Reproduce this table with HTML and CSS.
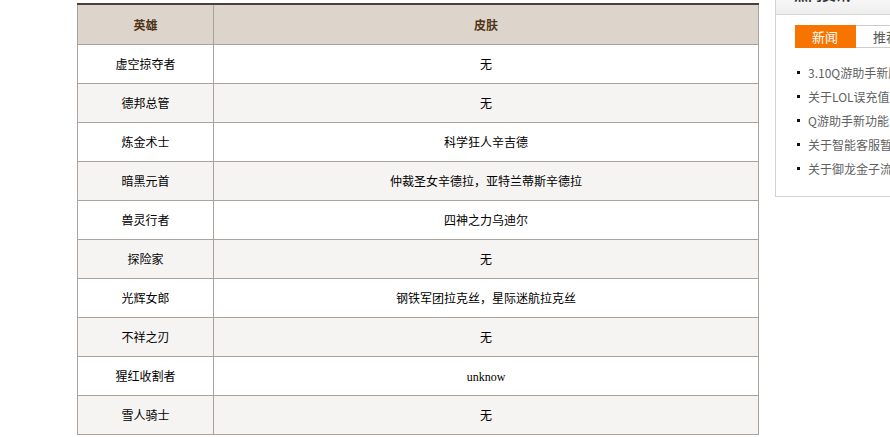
FILE: index.html
```html
<!DOCTYPE html>
<html lang="zh-CN">
<head>
<meta charset="utf-8">
<title>英雄皮肤</title>
<link rel="stylesheet" href="styles.css">
</head>
<body>
<div class="page">
  <div class="main">
    <table class="skins">
      <thead>
        <tr><th class="c1">英雄</th><th>皮肤</th></tr>
      </thead>
      <tbody>
        <tr><td class="c1">虚空掠夺者</td><td>无</td></tr>
        <tr><td class="c1">德邦总管</td><td>无</td></tr>
        <tr><td class="c1">炼金术士</td><td>科学狂人辛吉德</td></tr>
        <tr><td class="c1">暗黑元首</td><td>仲裁圣女辛德拉，亚特兰蒂斯辛德拉</td></tr>
        <tr><td class="c1">兽灵行者</td><td>四神之力乌迪尔</td></tr>
        <tr><td class="c1">探险家</td><td>无</td></tr>
        <tr><td class="c1">光辉女郎</td><td>钢铁军团拉克丝，星际迷航拉克丝</td></tr>
        <tr><td class="c1">不祥之刃</td><td>无</td></tr>
        <tr><td class="c1">猩红收割者</td><td><span class="latin">unknow</span></td></tr>
        <tr><td class="c1">雪人骑士</td><td>无</td></tr>
      </tbody>
    </table>
  </div>
  <aside class="side">
    <div class="side-head"><span class="side-title">热门资讯</span></div>
    <div class="side-body">
      <div class="tabs">
        <span class="tab active">新闻</span>
        <span class="tab">推荐</span>
      </div>
      <ul class="news">
        <li>3.10Q游助手新版</li>
        <li>关于LOL误充值</li>
        <li>Q游助手新功能</li>
        <li>关于智能客服暂</li>
        <li>关于御龙金子流</li>
      </ul>
    </div>
  </aside>
</div>
</body>
</html>
```

FILE: styles.css
```css
html, body {
  margin: 0;
  padding: 0;
  background: #fff;
  overflow: hidden;
}
body {
  font-family: "Noto Sans CJK SC", "Noto Sans", sans-serif;
  font-size: 12px;
  color: #000;
}
.page {
  width: 890px;
  height: 437px;
  overflow: hidden;
  display: flex;
  align-items: flex-start;
  padding: 3px 0 0 77px;
  box-sizing: border-box;
  gap: 16px;
}
.main {
  flex: 0 0 682px;
}
.skins {
  width: 682px;
  border-collapse: collapse;
  table-layout: fixed;
  border-top: 2px solid #4b4039;
}
.skins th, .skins td {
  border: 1px solid #aaa39d;
  text-align: center;
  padding: 0;
  line-height: 16px;
}
.skins th {
  background: #ddd5cc;
  color: #4f3416;
  font-weight: bold;
  height: 39px;
  border-top: none;
}
.skins td {
  height: 38px;
}
.skins .c1 {
  width: 135px;
}
.skins tbody tr:nth-child(even) td {
  background: #f5f4f2;
}
.latin {
  font-family: "Liberation Serif", serif;
  font-size: 12px;
}
.side {
  flex: 0 0 200px;
  margin-top: -18px;
  border: 1px solid #d3d3d3;
  background: #fff;
  height: 212px;
  box-sizing: border-box;
}
.side-head {
  height: 29px;
  border-bottom: 1px solid #d6d6d6;
  background: linear-gradient(#ffffff, #eeeeee);
  padding-left: 18px;
  box-sizing: border-box;
}
.side-title {
  display: block;
  font-weight: bold;
  font-size: 14px;
  line-height: 16px;
  padding-top: 0;
  color: #333;
}
.side-body {
  padding: 10px 0 0 19px;
}
.tabs {
  display: flex;
  height: 23px;
}
.tab {
  width: 61px;
  height: 23px;
  box-sizing: border-box;
  line-height: 21px;
  text-align: center;
  font-size: 13px;
  color: #555;
  border: 1px solid #ccc;
  border-left: none;
  background: #fff;
}
.tab.active {
  background: #f77400;
  border-color: #f77400;
  color: #fff;
}
.news {
  list-style: none;
  margin: 13px 0 0 0;
  padding: 0;
}
.news li {
  position: relative;
  height: 24px;
  line-height: 24px;
  padding-left: 13px;
  color: #5f5f5f;
  white-space: nowrap;
}
.news li::before {
  content: "";
  position: absolute;
  left: 2px;
  top: 10px;
  width: 3px;
  height: 3px;
  background: #111;
}
```
